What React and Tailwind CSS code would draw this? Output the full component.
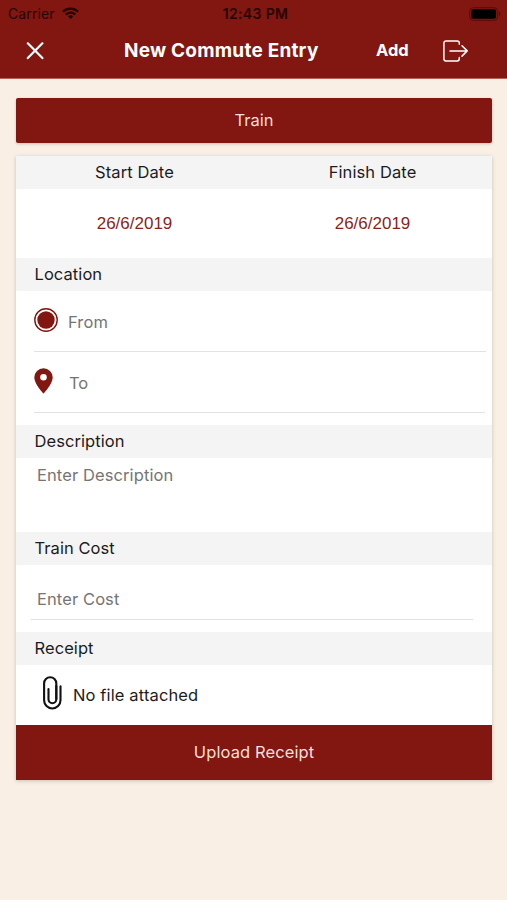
import * as React from "react"

const DATES = [
  { label: "Start Date", value: "26/6/2019" },
  { label: "Finish Date", value: "26/6/2019" },
]

function StatusBar() {
  return (
    <div className="flex h-[27px] items-center justify-between pl-2 pr-[6px] text-[#260303]">
      <div className="flex w-[150px] items-center gap-[7px]">
        <span className="text-[14px] tracking-[0.1px]">Carrier</span>
        <svg width="17" height="13" viewBox="0 0 17 13" fill="none" stroke="currentColor" strokeWidth="2.3">
          <path d="M0.9 4.7a10.8 10.8 0 0 1 15.2 0" />
          <path d="M3.7 7.6a6.8 6.8 0 0 1 9.6 0" />
          <path d="M8.5 12.2L5.9 9.6a3.7 3.7 0 0 1 5.2 0z" fill="currentColor" stroke="none" />
        </svg>
      </div>
      <span className="whitespace-nowrap pl-[2px] text-[14px] font-semibold tracking-[0.35px]">12:43 PM</span>
      <div className="flex w-[150px] items-center justify-end">
        <svg width="32" height="14" viewBox="0 0 32 14">
          <rect x="0.7" y="0.7" width="28" height="12.6" rx="3.6" fill="none" stroke="#5a0b08" strokeWidth="1" />
          <rect x="2.3" y="2.3" width="24.8" height="9.4" rx="2" fill="#000" />
          <path d="M30 4.8a2.4 2.4 0 0 1 0 4.4z" fill="#5a0b08" />
        </svg>
      </div>
    </div>
  )
}

function NavBar() {
  return (
    <div className="flex h-[51px] items-center pb-[4px] text-white">
      <button className="ml-[26px] w-[18px]">
        <svg width="18" height="18" viewBox="0 0 18 18" fill="none" stroke="currentColor" strokeWidth="2.2" strokeLinecap="round">
          <path d="M1.8 1.3l14.6 14.8M16.4 1.3L1.8 16.1" />
        </svg>
      </button>
      <h1 className="ml-[80px] w-[196px] whitespace-nowrap pt-[2px] text-[19px] font-bold tracking-[0.22px]">New Commute Entry</h1>
      <button className="ml-[56px] w-[36px] text-left text-[16.5px] font-bold">Add</button>
      <button className="ml-[31px]">
        <svg width="26" height="22" viewBox="0 0 26 22" fill="none" stroke="currentColor" strokeWidth="1.5" strokeLinecap="round" strokeLinejoin="round">
          <path d="M16.3 4.3V3A2.1 2.1 0 0 0 14.2 0.9H3A2.1 2.1 0 0 0 0.9 3V18.8A2.1 2.1 0 0 0 3 20.9H14.2A2.1 2.1 0 0 0 16.3 18.8V17.5" />
          <path d="M7 10.9H24.2M19 5.7L24.2 10.9L19 16.1" />
        </svg>
      </button>
    </div>
  )
}

function SectionTitle({ children }) {
  return (
    <h2 className="flex h-[33px] shrink-0 items-center bg-[#f4f4f4] pl-[18.5px] text-[16.5px] tracking-[0.07px] text-[#1c1c1c]">{children}</h2>
  )
}

export default function App() {
  return (
    <div className="flex h-[900px] w-[507px] flex-col overflow-hidden bg-[#f9efe4] font-['Inter','Noto_Sans',sans-serif]">
      <header className="h-[79px] shrink-0 border-b border-[#b5635a] bg-[#821610]">
        <StatusBar />
        <NavBar />
      </header>

      <main className="flex flex-col pl-4 pr-[15px] pt-[19px]">
        <button className="h-[45px] rounded-[2px] bg-[#821610] text-[16.5px] text-[#f8dfda] shadow-[0_1px_3px_rgba(0,0,0,0.2)]">
          Train
        </button>

        <section className="mt-[13px] flex flex-col bg-white shadow-[0_1px_4px_rgba(0,0,0,0.2)]">
          <div className="flex h-[102px]">
            {DATES.map((date) => (
              <div key={date.label} className="flex flex-1 flex-col text-center">
                <span className="flex h-[33px] items-center justify-center bg-[#f4f4f4] pr-px text-[16.5px] tracking-[0.1px] text-[#1c1c1c]">{date.label}</span>
                <span className="flex h-[69px] items-center justify-center pr-px font-['Liberation_Sans',sans-serif] text-[17px] text-[#8d1f1a]">{date.value}</span>
              </div>
            ))}
          </div>

          <SectionTitle>Location</SectionTitle>
          <div className="ml-[18px] mr-[6px] flex h-[61px] items-center border-b border-[#e2e2e2]">
            <svg width="24" height="24" viewBox="0 0 24 24" className="mb-[3px]">
              <circle cx="12" cy="12" r="11.2" fill="none" stroke="#821610" strokeWidth="1.4" />
              <circle cx="12" cy="12" r="8.7" fill="#821610" />
            </svg>
            <span className="ml-[10px] pt-[2px] text-[16.5px] tracking-[0.1px] text-[#757575]">From</span>
          </div>
          <div className="ml-[18px] mr-[7px] flex h-[61px] items-center border-b border-[#e2e2e2]">
            <svg width="19" height="26" viewBox="0 0 19 26" className="mb-[3px]">
              <path fillRule="evenodd" fill="#821610" d="M9.5 0.3A9.2 9.2 0 0 0 0.3 9.5C0.3 16 9.5 25.6 9.5 25.6S18.7 16 18.7 9.5A9.2 9.2 0 0 0 9.5 0.3zM9.5 6A3.3 3.3 0 1 1 9.5 12.6A3.3 3.3 0 1 1 9.5 6z" />
            </svg>
            <span className="ml-[16px] pt-[2px] text-[16.5px] text-[#757575]">To</span>
          </div>

          <div className="mt-3">
            <SectionTitle>Description</SectionTitle>
          </div>
          <div className="h-[74px] pl-[21px] pt-[5px] text-[16.5px] leading-[24px] tracking-[0.1px] text-[#757575]">Enter Description</div>

          <SectionTitle>Train Cost</SectionTitle>
          <div className="ml-[15px] mr-[19px] flex h-[55px] items-end border-b border-[#e2e2e2] pb-[8px] pl-[6px] text-[16.5px] leading-[24px] tracking-[0.1px] text-[#757575]">
            Enter Cost
          </div>

          <div className="mt-3">
            <SectionTitle>Receipt</SectionTitle>
          </div>
          <div className="flex h-[60px] items-center pl-[27px]">
            <svg width="19" height="34" viewBox="0 0 19 34" fill="none" stroke="#111" strokeWidth="2.1" strokeLinecap="round" className="mb-[4px]">
              <path d="M13.3 23V7.4A6.1 6.1 0 0 0 1.1 7.4V24.3A8.2 8.2 0 0 0 17.5 24.3V10.3" />
              <path d="M13.3 10V23.3A3.9 3.9 0 0 1 5.5 23.3V13" />
            </svg>
            <span className="ml-[11px] text-[16.5px] tracking-[0.13px] text-[#1c1c1c]">No file attached</span>
          </div>

          <button className="h-[55px] bg-[#821610] text-[16.5px] tracking-[0.1px] text-[#f8dfda]">Upload Receipt</button>
        </section>
      </main>
    </div>
  )
}
